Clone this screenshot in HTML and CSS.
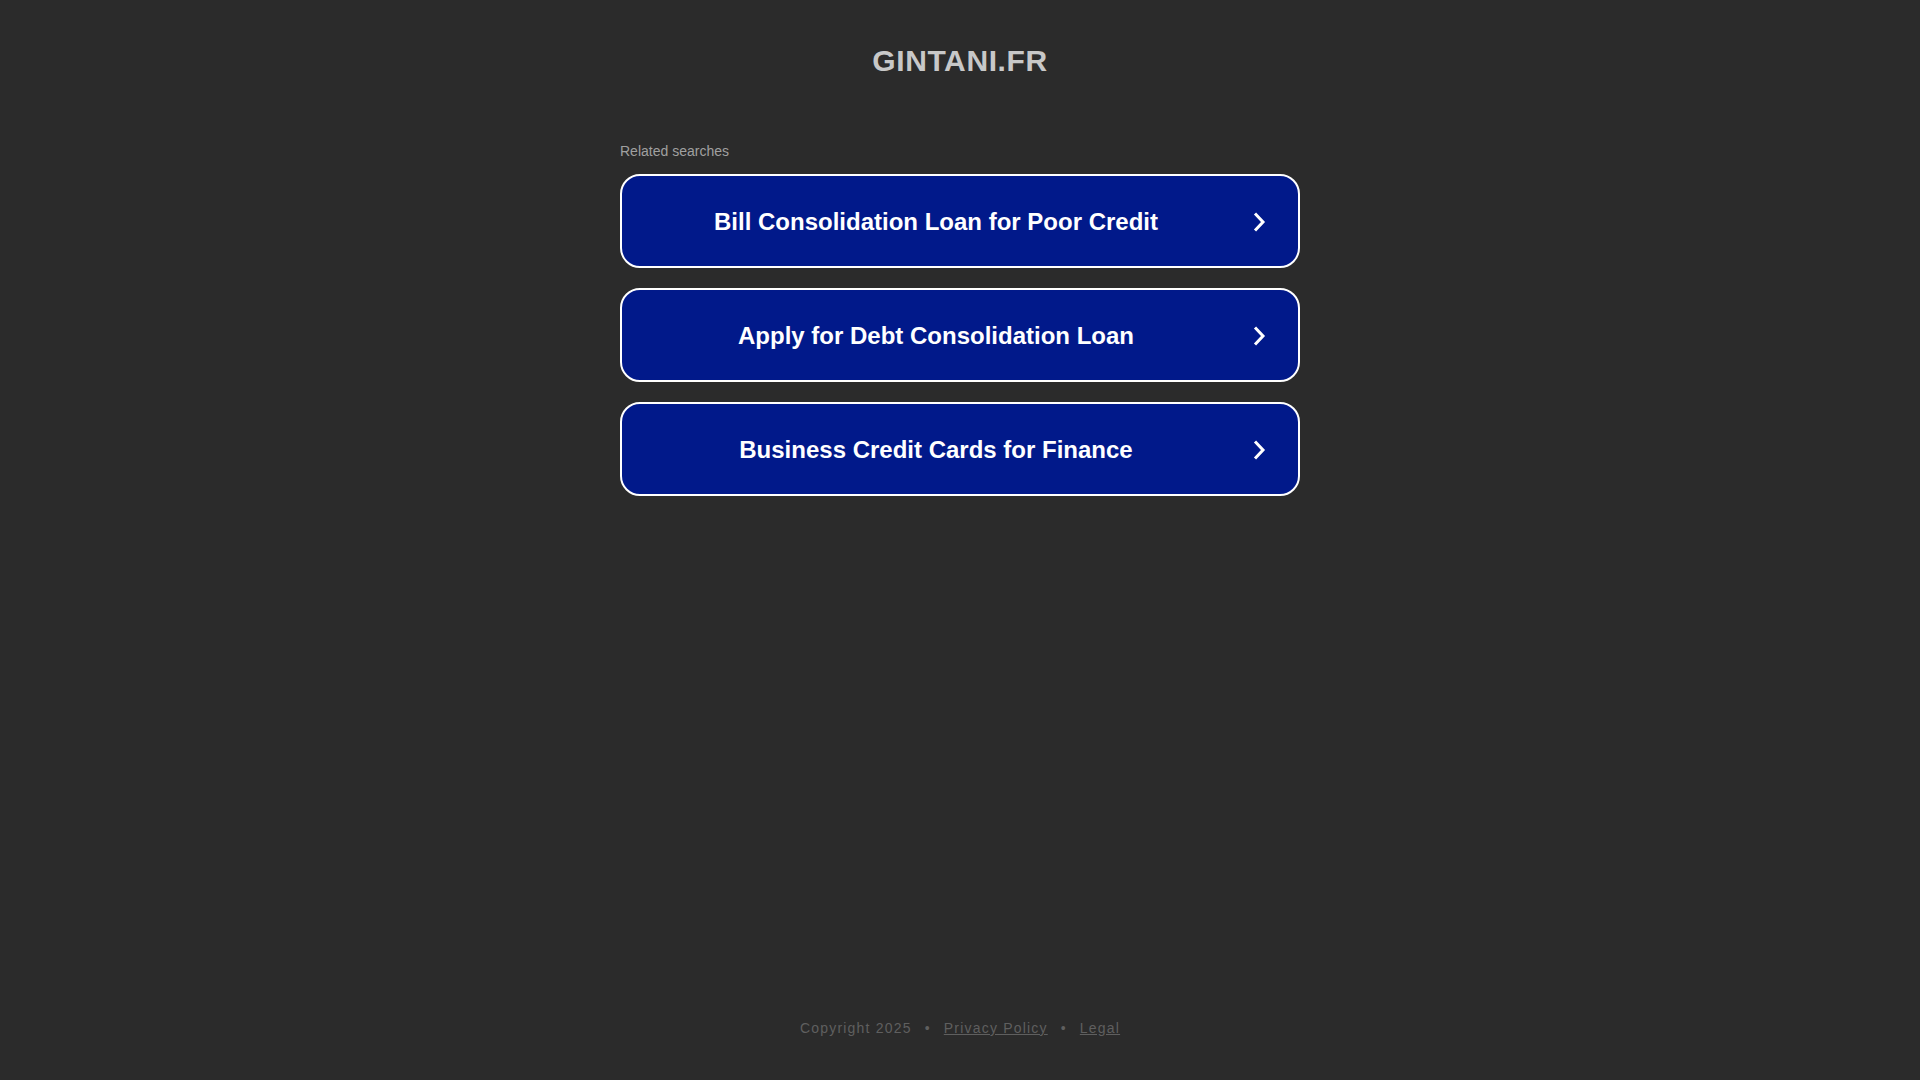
FILE: index.html
```html
<!DOCTYPE html>
<html lang="en">
<head>
<meta charset="utf-8">
<title>gintani.fr</title>
<link rel="stylesheet" href="styles.css">
</head>
<body>
<div class="page">
  <header class="header">
    <h1 class="domain">GINTANI.FR</h1>
  </header>
  <main class="content">
    <div class="related">Related searches</div>
    <div class="cards">
      <a class="card" href="#">
        <span class="card-text">Bill Consolidation Loan for Poor Credit</span>
        <span class="card-arrow"><svg width="14" height="22" viewBox="0 0 14 22"><polyline points="3,2.5 11,11 3,19.5" fill="none" stroke="#fff" stroke-width="3" stroke-linecap="butt"/></svg></span>
      </a>
      <a class="card" href="#">
        <span class="card-text">Apply for Debt Consolidation Loan</span>
        <span class="card-arrow"><svg width="14" height="22" viewBox="0 0 14 22"><polyline points="3,2.5 11,11 3,19.5" fill="none" stroke="#fff" stroke-width="3" stroke-linecap="butt"/></svg></span>
      </a>
      <a class="card" href="#">
        <span class="card-text">Business Credit Cards for Finance</span>
        <span class="card-arrow"><svg width="14" height="22" viewBox="0 0 14 22"><polyline points="3,2.5 11,11 3,19.5" fill="none" stroke="#fff" stroke-width="3" stroke-linecap="butt"/></svg></span>
      </a>
    </div>
  </main>
  <footer class="footer">
    <span>Copyright 2025</span>
    <span class="sep">•</span>
    <a href="#">Privacy Policy</a>
    <span class="sep">•</span>
    <a href="#">Legal</a>
  </footer>
</div>
</body>
</html>
```
FILE: styles.css
```css
html, body {
  margin: 0;
  padding: 0;
  background: #2b2b2b;
  font-family: "Liberation Sans", Arial, sans-serif;
}

.page {
  min-height: 100vh;
  display: flex;
  flex-direction: column;
  align-items: center;
}

.header {
  padding-top: 40px;
}

.domain {
  margin: 0;
  font-size: 30px;
  line-height: 42px;
  font-weight: bold;
  color: #c8c8c8;
  letter-spacing: 0.6px;
  text-align: center;
}

.content {
  width: 680px;
  flex: 1;
  padding-top: 60px;
}

.related {
  font-size: 14px;
  line-height: 18px;
  color: #a0a0a0;
  margin-bottom: 14px;
}

.cards {
  display: flex;
  flex-direction: column;
  gap: 20px;
}

.card {
  box-sizing: border-box;
  height: 94px;
  display: flex;
  align-items: center;
  background: #01198a;
  border: 2px solid #ffffff;
  border-radius: 20px;
  padding: 0 14px 0 16px;
  text-decoration: none;
}

.card-text {
  flex: 1;
  text-align: center;
  color: #ffffff;
  font-size: 24px;
  font-weight: bold;
  padding-top: 2px;
}

.card-arrow {
  width: 50px;
  display: flex;
  justify-content: center;
  align-items: center;
  padding-top: 2px;
}

.card-arrow svg {
  display: block;
}

.footer {
  padding-bottom: 42px;
  font-size: 14px;
  line-height: 20px;
  letter-spacing: 1.2px;
  color: #5f5f5f;
  display: flex;
  align-items: center;
}

.footer a {
  color: #5f5f5f;
  text-decoration: underline;
}

.sep {
  padding: 0 13px;
}
```
